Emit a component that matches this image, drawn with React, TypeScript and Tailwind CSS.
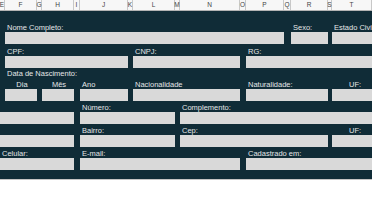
const cols = ["E", "F", "G", "H", "I", "J", "K", "L", "M", "N", "O", "P", "Q", "R", "S", "T"];

const grid =
  "grid grid-cols-[5px_32px_5px_32px_6px_48px_5px_42px_5px_60px_6px_38px_7px_37px_4px_40px]";

function Label({ className = "", children }: { className?: string; children: React.ReactNode }) {
  return <div className={`pl-[2px] leading-[9px] text-[#e4e6e7] ${className}`}>{children}</div>;
}

function Box({ className = "" }: { className?: string }) {
  return <div className={`h-[12px] bg-[#d9d9d9] ${className}`} />;
}

export default function App() {
  return (
    <div
      className="w-[372px] h-[200px] overflow-hidden whitespace-nowrap bg-white text-[7.5px]"
      style={{ fontFamily: '"Liberation Sans", Arial, sans-serif' }}
    >
      {/* column headers */}
      <div className={`${grid} h-[11px] border-b border-[#b4b4b4] bg-[#f7f7f7]`}>
        {cols.map((c) => (
          <div
            key={c}
            className="flex items-center justify-center border-r border-[#c8c8c8] text-[6.5px] leading-none text-[#444]"
          >
            {c}
          </div>
        ))}
      </div>

      {/* form */}
      <div className="h-[169px] border-b border-[#c4c4c4] bg-[#102c37] pt-[10px]">
        <div className={`${grid} h-[11px] items-end`}>
          <Label className="col-start-2 col-span-11">Nome Completo:</Label>
          <Label className="col-start-14 pl-[1px]">Sexo:</Label>
          <Label className="col-start-16 pl-[1px]">Estado Civil</Label>
        </div>
        <div className={grid}>
          <Box className="col-start-2 col-span-11" />
          <Box className="col-start-14" />
          <Box className="col-start-16" />
        </div>

        <div className={`${grid} h-[12px] items-end`}>
          <Label className="col-start-2 col-span-5">CPF:</Label>
          <Label className="col-start-8 col-span-3">CNPJ:</Label>
          <Label className="col-start-12 col-span-5 pl-[1px]">RG:</Label>
        </div>
        <div className={grid}>
          <Box className="col-start-2 col-span-5" />
          <Box className="col-start-8 col-span-3" />
          <Box className="col-start-12 col-span-5" />
        </div>

        <div className={`${grid} h-[10px] items-end`}>
          <Label className="col-start-2 col-span-9">Data de Nascimento:</Label>
        </div>
        <div className={`${grid} h-[11px] items-end`}>
          <Label className="col-start-2 pl-0 text-center">Dia</Label>
          <Label className="col-start-4 pl-0 text-center">Mês</Label>
          <Label className="col-start-6">Ano</Label>
          <Label className="col-start-8 col-span-3">Nacionalidade</Label>
          <Label className="col-start-12 col-span-3 pl-[1px]">Naturalidade:</Label>
          <Label className="col-start-16 pl-[17px]">UF:</Label>
        </div>
        <div className={grid}>
          <Box className="col-start-2" />
          <Box className="col-start-4" />
          <Box className="col-start-6" />
          <Box className="col-start-8 col-span-3" />
          <Box className="col-start-12 col-span-3" />
          <Box className="col-start-16" />
        </div>

        <div className={`${grid} h-[11px] items-end`}>
          <Label className="col-start-6 col-span-3">Número:</Label>
          <Label className="col-start-10 col-span-7">Complemento:</Label>
        </div>
        <div className={grid}>
          <Box className="col-start-1 col-span-4" />
          <Box className="col-start-6 col-span-3" />
          <Box className="col-start-10 col-span-7" />
        </div>

        <div className={`${grid} h-[11px] items-end`}>
          <Label className="col-start-6 col-span-3">Bairro:</Label>
          <Label className="col-start-10 col-span-5">Cep:</Label>
          <Label className="col-start-16 pl-[17px]">UF:</Label>
        </div>
        <div className={grid}>
          <Box className="col-start-1 col-span-4" />
          <Box className="col-start-6 col-span-3" />
          <Box className="col-start-10 col-span-5" />
          <Box className="col-start-16" />
        </div>

        <div className={`${grid} h-[11px] items-end`}>
          <Label className="col-start-1 col-span-4 pl-[1px]">Celular:</Label>
          <Label className="col-start-6 col-span-5">E-mail:</Label>
          <Label className="col-start-12 col-span-5">Cadastrado em:</Label>
        </div>
        <div className={grid}>
          <Box className="col-start-1 col-span-4" />
          <Box className="col-start-6 col-span-5" />
          <Box className="col-start-12 col-span-5" />
        </div>
      </div>
    </div>
  );
}
